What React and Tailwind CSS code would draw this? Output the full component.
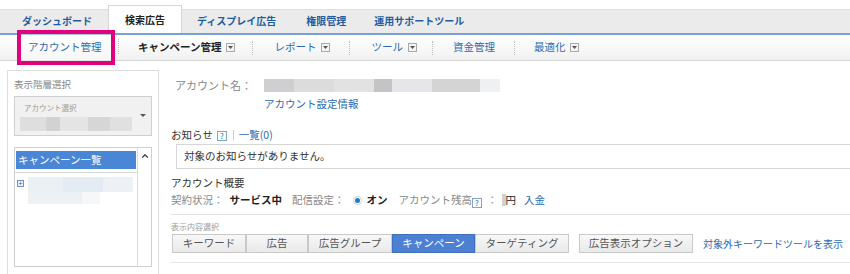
import { ChevronUp } from 'lucide-react'

const DropIcon = () => (
  <span className="inline-flex items-center justify-center w-[9px] h-[9px] border border-[#a9a9a9] bg-[#f4f4f4] ml-[5px]">
    <svg width="5" height="3" viewBox="0 0 5 3"><path d="M0 0h5L2.5 3z" fill="#555" /></svg>
  </span>
)

const HelpIcon = () => (
  <span className="inline-flex items-center justify-center w-[10px] h-[10px] border border-[#7fa3d3] text-[8px] leading-none text-[#2f6bb5] bg-white">?</span>
)

const Sep = () => <span className="h-[14px] border-l border-dotted border-[#bdbdbd]" />

const topTabs = [
  { label: 'ダッシュボード', cls: 'pl-[22px] pr-[16px]' },
  { label: '検索広告', cls: 'pl-[16px] pr-[16px]', active: true },
  { label: 'ディスプレイ広告', cls: 'pl-[15px] pr-[15px]' },
  { label: '権限管理', cls: 'pl-[15px] pr-[13px]' },
  { label: '運用サポートツール', cls: 'pl-[15px] pr-[14px]' },
]

const viewTabs = [
  { label: 'キーワード', w: 'w-[74px]' },
  { label: '広告', w: 'w-[62px]' },
  { label: '広告グループ', w: 'w-[84px]' },
  { label: 'キャンペーン', w: 'w-[83px]', active: true },
  { label: 'ターゲティング', w: 'w-[94px]' },
]

export default function App() {
  return (
    <div className="w-[850px] h-[274px] overflow-hidden bg-white font-['Noto_Sans_CJK_JP',sans-serif] text-[10.5px] leading-none text-[#333]">
      {/* top tabs */}
      <div className="pt-[9px]">
        <div className="flex items-end h-[26px] bg-[#ebebeb] border-t border-[#dddddd] border-b-2 border-b-[#77a0d8]">
          {topTabs.map((t) =>
            t.active ? (
              <div key={t.label} className={`-mt-[4px] h-[28px] flex items-center bg-white border-x border-t border-[#d6d6d6] text-[10px] font-bold text-[#222] ${t.cls}`}>
                {t.label}
              </div>
            ) : (
              <div key={t.label} className={`h-[24px] flex items-center text-[10px] font-bold text-[#1f5d9f] ${t.cls}`}>
                {t.label}
              </div>
            )
          )}
        </div>
      </div>

      {/* sub nav */}
      <div className="flex items-center h-[26px] bg-gradient-to-b from-white to-[#f1f1f1] border-b border-[#d4d4d4]">
        <div className="ml-[17px] -my-[4px] w-[98px] h-[35px] border-4 border-[#e2007c] flex items-center pl-[7px] text-[#2c6bb0] bg-white/40 relative z-10">
          アカウント管理
        </div>
        <span className="ml-[3px]"><Sep /></span>
        <div className="flex items-center pl-[19px] pr-[17px] font-bold text-[#222]">キャンペーン管理<DropIcon /></div>
        <Sep />
        <div className="flex items-center pl-[21px] pr-[19px] text-[#2c6bb0]">レポート<DropIcon /></div>
        <Sep />
        <div className="flex items-center pl-[21px] pr-[15px] text-[#2c6bb0]">ツール<DropIcon /></div>
        <Sep />
        <div className="flex items-center pl-[20px] pr-[19px] text-[#2c6bb0]">資金管理</div>
        <Sep />
        <div className="flex items-center pl-[19px] text-[#2c6bb0]">最適化<DropIcon /></div>
      </div>

      {/* body */}
      <div className="flex">
        {/* left panel */}
        <div className="shrink-0 ml-[7px] mt-[9px] w-[152px] h-[220px] border border-[#dddddd] px-[6px] pt-[8px]">
          <div className="text-[9.5px] text-[#888] h-[12px] flex items-center">表示階層選択</div>
          <div className="mt-[5px] h-[40px] bg-[#f1f1f1] border border-[#cfcfcf] flex">
            <div className="flex-1 pl-[9px] pt-[7px]">
              <div className="text-[7.5px] text-[#9a9a9a]">アカウント選択</div>
              <div className="mt-[5px] flex h-[14px] w-[112px] -ml-[4px]">
                <div className="w-[26px] bg-[#dedede]" />
                <div className="w-[14px] bg-[#d2d2d2]" />
                <div className="w-[28px] bg-[#e4e4e4]" />
                <div className="w-[22px] bg-[#d6d6d6]" />
                <div className="w-[22px] bg-[#e0e0e0]" />
              </div>
            </div>
            <div className="w-[16px] pt-[17px] flex justify-center">
              <svg width="6" height="3" viewBox="0 0 6 3"><path d="M0 0h6L3 3z" fill="#555" /></svg>
            </div>
          </div>
          <div className="mt-[11px] h-[120px] border border-[#cfcfcf] flex">
            <div className="flex-1 flex flex-col">
              <div className="mx-[1px] mt-[3px] h-[18px] bg-[#4a86d6] text-white text-[10.5px] flex items-center pl-[2px]">キャンペーン一覧</div>
              <div className="mt-[3px] border-t border-[#d8d8d8]" />
              <div className="flex mt-[4px] pl-[2px]">
                <span className="mt-[3px] w-[7px] h-[7px] border border-[#6b93c9] bg-[#eef3fa] flex items-center justify-center text-[7px] text-[#2f5f9e] leading-none">+</span>
                <div className="ml-[4px] flex flex-col">
                  <div className="flex h-[15px] w-[105px]">
                    <div className="w-[35px] bg-[#ebf0f5]" />
                    <div className="w-[40px] bg-[#e4ebf2]" />
                    <div className="w-[30px] bg-[#edf1f5]" />
                  </div>
                  <div className="flex h-[12px] w-[72px]">
                    <div className="w-[54px] bg-[#eef1f4]" />
                    <div className="w-[18px] bg-[#f6f7f9]" />
                  </div>
                </div>
              </div>
            </div>
            <div className="w-[14px] border-l border-[#dcdcdc] flex justify-center pt-[3px]">
              <ChevronUp size={10} strokeWidth={3} color="#444" />
            </div>
          </div>
        </div>

        {/* main content */}
        <div className="ml-[12px] flex-1 min-w-0 flex flex-col">
          <div className="mt-[18px] ml-[4px] flex items-center h-[13px]">
            <span className="w-[89px] text-[#888] text-[11px]">アカウント名：</span>
            <div className="flex h-[13px] w-[236px]">
              <div className="w-[30px] bg-[#cfcfd1]" />
              <div className="w-[40px] bg-[#dcdcdc]" />
              <div className="w-[40px] bg-[#e2e2e2]" />
              <div className="w-[18px] bg-[#c4c4c6]" />
              <div className="w-[40px] bg-[#e6e6e8]" />
              <div className="w-[48px] bg-[#d4d4d4]" />
              <div className="w-[20px] bg-[#eef0f2]" />
            </div>
          </div>
          <div className="mt-[5px] ml-[93px] h-[14px] flex items-center text-[#2c6bb0]">アカウント設定情報</div>

          <div className="mt-[17px] h-[14px] flex items-center">
            <span className="text-[#333]">お知らせ</span>
            <span className="ml-[4px]"><HelpIcon /></span>
            <span className="ml-[6px] h-[10px] border-l border-[#ccc]" />
            <span className="ml-[5px] text-[#2c6bb0]">一覧(0)</span>
          </div>
          <div className="mt-[2px] ml-[5px] h-[25px] border border-[#d6d6d6] border-r-0 flex items-center pl-[7px] text-[#333]">
            対象のお知らせがありません。
          </div>

          <div className="mt-[7px] h-[14px] flex items-center text-[#333]">アカウント概要</div>
          <div className="mt-[3px] h-[14px] flex items-center">
            <span className="text-[#888]">契約状況：</span>
            <span className="ml-[6px] font-bold text-[#222]">サービス中</span>
            <span className="ml-[10px] text-[#888]">配信設定：</span>
            <span className="ml-[8px] w-[9px] h-[9px] rounded-full border border-[#cfcfcf] bg-white flex items-center justify-center">
              <span className="w-[5px] h-[5px] rounded-full bg-[#1e7ad6]" />
            </span>
            <span className="ml-[5px] font-bold text-[#222]">オン</span>
            <span className="ml-[11px] text-[#888]">アカウント残高</span>
            <span className="mt-[5px]"><HelpIcon /></span>
            <span className="ml-[5px] text-[#888]">：</span>
            <span className="ml-[4px] w-[4px] h-[12px] bg-[#d0d0d0]" />
            <span className="text-[#222]">円</span>
            <span className="ml-[8px] text-[#2c6bb0]">入金</span>
          </div>
          <div className="mt-[7px] border-t border-[#e2e2e2]" />

          <div className="mt-[7px] h-[10px] flex items-center text-[8px] text-[#999]">表示内容選択</div>
          <div className="mt-[2px] ml-[1px] flex items-center whitespace-nowrap">
            {viewTabs.map((t) => (
              <div
                key={t.label}
                className={`${t.w} shrink-0 h-[19px] flex items-center justify-center border ${
                  t.active
                    ? 'bg-[#4d80d2] border-[#3f70c0] text-white'
                    : 'bg-gradient-to-b from-[#f8f8f8] to-[#e9e9e9] border-[#c9c9c9] text-[#555]'
                }`}
              >
                {t.label}
              </div>
            ))}
            <div className="shrink-0 ml-[10px] w-[114px] h-[19px] flex items-center justify-center border border-[#c9c9c9] bg-gradient-to-b from-[#f8f8f8] to-[#e9e9e9] text-[#555]">
              広告表示オプション
            </div>
            <span className="shrink-0 ml-[10px] text-[10px] text-[#2c6bb0]">対象外キーワードツールを表示</span>
          </div>
          <div className="mt-[9px] border-t border-[#e6e6e6]" />
        </div>
      </div>
    </div>
  )
}
